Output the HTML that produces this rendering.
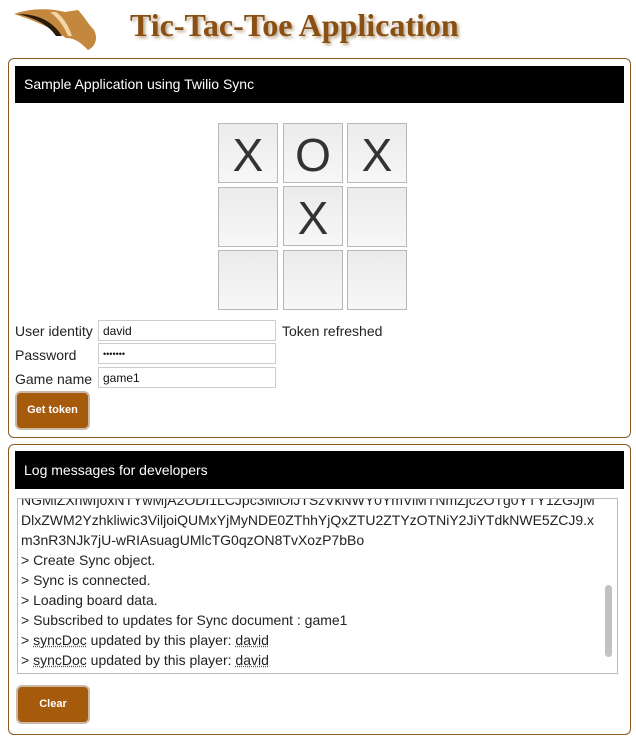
<!DOCTYPE html>
<html><head><style>
body{margin:0;width:636px;height:738px;background:#fff;font-family:"Liberation Sans",sans-serif;position:relative;overflow:hidden}
.abs{position:absolute}
.title{left:130px;top:7px;font-family:"Liberation Serif",serif;font-weight:bold;font-size:32px;color:#8a4f12;text-shadow:2px 2px 3px #b9a48a;white-space:nowrap}
.panel{position:absolute;left:8px;width:621px;border:1px solid #8a5a22;border-radius:6px}
.hdr{position:absolute;left:6px;right:6px;background:#000;color:#fff;font-size:14px;padding-left:9px;box-sizing:border-box}
.cell{position:absolute;width:58px;height:58px;border:1px solid #b8b8b8;background:linear-gradient(#ebebeb,#f7f7f7);font-size:46px;color:#333;text-align:center;line-height:62px}
.lbl{position:absolute;left:6px;font-size:14px;color:#222}
.inp{position:absolute;left:89px;width:178px;height:21px;border:1px solid #ccc;font-size:12px;padding-left:4px;line-height:20px;box-sizing:border-box;color:#111}
.btn{position:absolute;background:#a65a0c;border:2px solid #c9b9a6;border-radius:6px;color:#fff;font-size:11px;font-weight:bold;text-align:center;box-sizing:border-box}
.log{position:absolute;left:8px;top:53px;width:601px;height:176px;border:1px solid #bbb;overflow:hidden;font-size:14px;color:#222;box-sizing:border-box}
.log div{height:20px;line-height:20px;padding-left:3px;white-space:nowrap}
.sp{text-decoration:underline dotted #d22}
</style></head><body>
<svg class="abs" style="left:10px;top:2px" width="90" height="50" viewBox="0 0 90 50">
<path d="M4 12 C20 6 40 6 55 10 L68 8 C74 14 78 22 84 28 C88 36 86 44 78 48 C72 42 66 36 56 36 C48 30 30 20 4 12Z" fill="#c4873e"/>
<path d="M8 12 C26 12 42 18 52 34 L46 34 C38 22 24 16 8 12Z" fill="#2a1a0a"/>
<path d="M40 10 C48 16 54 24 58 34 L62 34 C58 22 52 14 46 10Z" fill="#f2d6a8"/>
</svg>
<div class="abs title">Tic-Tac-Toe Application</div>

<div class="panel" style="top:58px;height:378px">
<div class="hdr" style="top:7px;height:37px;line-height:37px">Sample Application using Twilio Sync</div>
<div class="cell" style="left:209px;top:64px">X</div>
<div class="cell" style="left:274px;top:64px">O</div>
<div class="cell" style="left:338px;top:64px">X</div>
<div class="cell" style="left:209px;top:128px"></div>
<div class="cell" style="left:274px;top:127px">X</div>
<div class="cell" style="left:338px;top:128px"></div>
<div class="cell" style="left:209px;top:191px"></div>
<div class="cell" style="left:274px;top:191px"></div>
<div class="cell" style="left:338px;top:191px"></div>
<div class="lbl" style="top:264px">User identity</div>
<div class="lbl" style="top:288px">Password</div>
<div class="lbl" style="top:312px">Game name</div>
<div class="inp" style="top:261px">david</div>
<div class="inp" style="top:284px;font-size:9px">•••••••</div>
<div class="inp" style="top:308px">game1</div>
<div class="lbl" style="left:273px;top:264px">Token refreshed</div>
<div class="btn" style="left:6px;top:332px;width:75px;height:39px;line-height:35px">Get token</div>
</div>

<div class="panel" style="top:444px;height:289px">
<div class="hdr" style="top:6px;height:38px;line-height:38px">Log messages for developers</div>
<div class="log">
<div style="margin-top:-9px">NGMiZXhwIjoxNTYwMjA2ODI1LCJpc3MiOiJTSzVkNWY0YmViMTNmZjc2OTg0YTY1ZGJjM</div>
<div>DlxZWM2Yzhkliwic3ViljoiQUMxYjMyNDE0ZThhYjQxZTU2ZTYzOTNiY2JiYTdkNWE5ZCJ9.x</div>
<div>m3nR3NJk7jU-wRIAsuagUMlcTG0qzON8TvXozP7bBo</div>
<div>&gt; Create Sync object.</div>
<div>&gt; Sync is connected.</div>
<div>&gt; Loading board data.</div>
<div>&gt; Subscribed to updates for Sync document : game1</div>
<div>&gt; <span class="sp">syncDoc</span> updated by this player: <span class="sp">david</span></div>
<div>&gt; <span class="sp">syncDoc</span> updated by this player: <span class="sp">david</span></div>
<div class="abs" style="left:587px;top:86px;width:7px;height:72px;background:#c2c2c2;border-radius:4px;padding:0"></div>
</div>
<div class="btn" style="left:7px;top:240px;width:74px;height:39px;line-height:35px">Clear</div>
</div>
</body></html>
